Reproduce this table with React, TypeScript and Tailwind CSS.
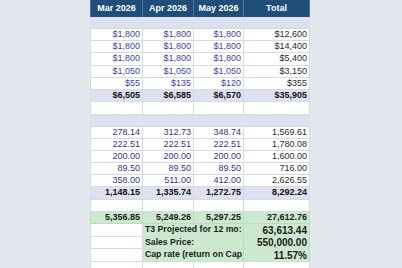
import React from "react";

type RowProps = {
  h: string;
  bg?: string;
  children: React.ReactNode;
};

function Row({ h, bg = "bg-white", children }: RowProps) {
  return (
    <div className={`flex ${h} ${bg} border-b border-[#d6dae3]`}>{children}</div>
  );
}

type CellProps = {
  w: string;
  className?: string;
  children?: React.ReactNode;
};

function Cell({ w, className = "", children }: CellProps) {
  return (
    <div
      className={`${w} shrink-0 flex items-center justify-end overflow-hidden whitespace-nowrap border-r border-[#d6dae3] pr-[2px] ${className}`}
    >
      {children}
    </div>
  );
}

const W0 = "w-[53px] border-l";
const W1 = "w-[51px]";
const W2 = "w-[50px]";
const W3 = "w-[66px]";

const sec1: string[][] = [
  ["$1,800", "$1,800", "$1,800", "$12,600"],
  ["$1,800", "$1,800", "$1,800", "$14,400"],
  ["$1,800", "$1,800", "$1,800", "$5,400"],
  ["$1,050", "$1,050", "$1,050", "$3,150"],
  ["$55", "$135", "$120", "$355"],
];
const sec1H = ["h-[12px]", "h-[12px]", "h-[13px]", "h-[12px]", "h-[12px]"];

const sec2: string[][] = [
  ["278.14", "312.73", "348.74", "1,569.61"],
  ["222.51", "222.51", "222.51", "1,780.08"],
  ["200.00", "200.00", "200.00", "1,600.00"],
  ["89.50", "89.50", "89.50", "716.00"],
  ["358.00", "511.00", "412.00", "2,626.55"],
];

function DataRow({ vals, h, color }: { vals: string[]; h: string; color: string }) {
  return (
    <Row h={h}>
      <Cell w={W0} className={color}>{vals[0]}</Cell>
      <Cell w={W1} className={color}>{vals[1]}</Cell>
      <Cell w={W2} className={color}>{vals[2]}</Cell>
      <Cell w={W3} className="text-[#2b2b2b]">{vals[3]}</Cell>
    </Row>
  );
}

function BoldRow({ vals, h }: { vals: string[]; h: string }) {
  return (
    <Row h={h} bg="bg-[#dde1f1]">
      <Cell w={W0} className="font-bold text-[#111]">{vals[0]}</Cell>
      <Cell w={W1} className="font-bold text-[#111]">{vals[1]}</Cell>
      <Cell w={W2} className="font-bold text-[#111]">{vals[2]}</Cell>
      <Cell w={W3} className="font-bold text-[#111]">{vals[3]}</Cell>
    </Row>
  );
}

function EmptyRow({ h }: { h: string }) {
  return (
    <Row h={h}>
      <Cell w={W0} />
      <Cell w={W1} />
      <Cell w={W2} />
      <Cell w={W3} />
    </Row>
  );
}

function Band({ h }: { h: string }) {
  return <div className={`${h} w-[220px] bg-[#dbe1ee] border-b border-[#d2d8e4]`} />;
}

function LabelRow({ h, label, value }: { h: string; label: string; value: string }) {
  return (
    <div className={`flex ${h} border-b border-[#d6dae3]`}>
      <div className="w-[53px] shrink-0 bg-white border-l border-r border-[#d6dae3]" />
      <div className="w-[101px] shrink-0 bg-[#cbeacd] border-r border-[#b9dcbc] flex items-center overflow-hidden whitespace-nowrap pl-[2px] text-[8.7px] font-bold text-[#1a1a1a]">
        {label}
      </div>
      <div className="w-[66px] shrink-0 bg-[#cbeacd] border-r border-[#b9dcbc] flex items-center justify-end pr-[2px] text-[10px] font-bold text-[#1a1a1a] whitespace-nowrap">
        {value}
      </div>
    </div>
  );
}

export default function App() {
  return (
    <div className="min-h-screen w-full bg-[#e3e7ee] font-['Liberation_Sans',Arial,sans-serif] text-[9px] overflow-hidden h-[268px]">
      <div className="ml-[90px] w-[220px]">
        <div className="flex h-[17px] bg-[#1f4e79] text-white font-bold">
          <div className="w-[53px] shrink-0 border-l border-r border-[#4f76a0] flex items-center justify-center">Mar 2026</div>
          <div className="w-[51px] shrink-0 border-r border-[#4f76a0] flex items-center justify-center">Apr 2026</div>
          <div className="w-[50px] shrink-0 border-r border-[#4f76a0] flex items-center justify-center">May 2026</div>
          <div className="w-[66px] shrink-0 border-r border-[#4f76a0] flex items-center justify-center">Total</div>
        </div>
        <Band h="h-[12px]" />
        {sec1.map((v, i) => (
          <DataRow key={i} vals={v} h={sec1H[i]} color="text-[#4343ab]" />
        ))}
        <BoldRow vals={["$6,505", "$6,585", "$6,570", "$35,905"]} h="h-[12px]" />
        <EmptyRow h="h-[13px]" />
        <Band h="h-[12px]" />
        {sec2.map((v, i) => (
          <DataRow key={i} vals={v} h="h-[12px]" color="text-[#35358c]" />
        ))}
        <BoldRow vals={["1,148.15", "1,335.74", "1,272.75", "8,292.24"]} h="h-[13px]" />
        <EmptyRow h="h-[12px]" />
        <div className="flex h-[12px] bg-[#cbeacd] border-b border-[#b9dcbc] font-bold text-[#1a1a1a]">
          <Cell w="w-[53px] border-l !border-[#b9dcbc]">5,356.85</Cell>
          <Cell w="w-[51px] !border-[#b9dcbc]">5,249.26</Cell>
          <Cell w="w-[50px] !border-[#b9dcbc]">5,297.25</Cell>
          <Cell w="w-[66px] !border-[#b9dcbc]">27,612.76</Cell>
        </div>
        <LabelRow h="h-[13px]" label="T3 Projected for 12 mo:" value="63,613.44" />
        <LabelRow h="h-[12px]" label="Sales Price:" value="550,000.00" />
        <LabelRow h="h-[13px]" label="Cap rate (return on Cap" value="11.57%" />
        <EmptyRow h="h-[12px]" />
      </div>
    </div>
  );
}
